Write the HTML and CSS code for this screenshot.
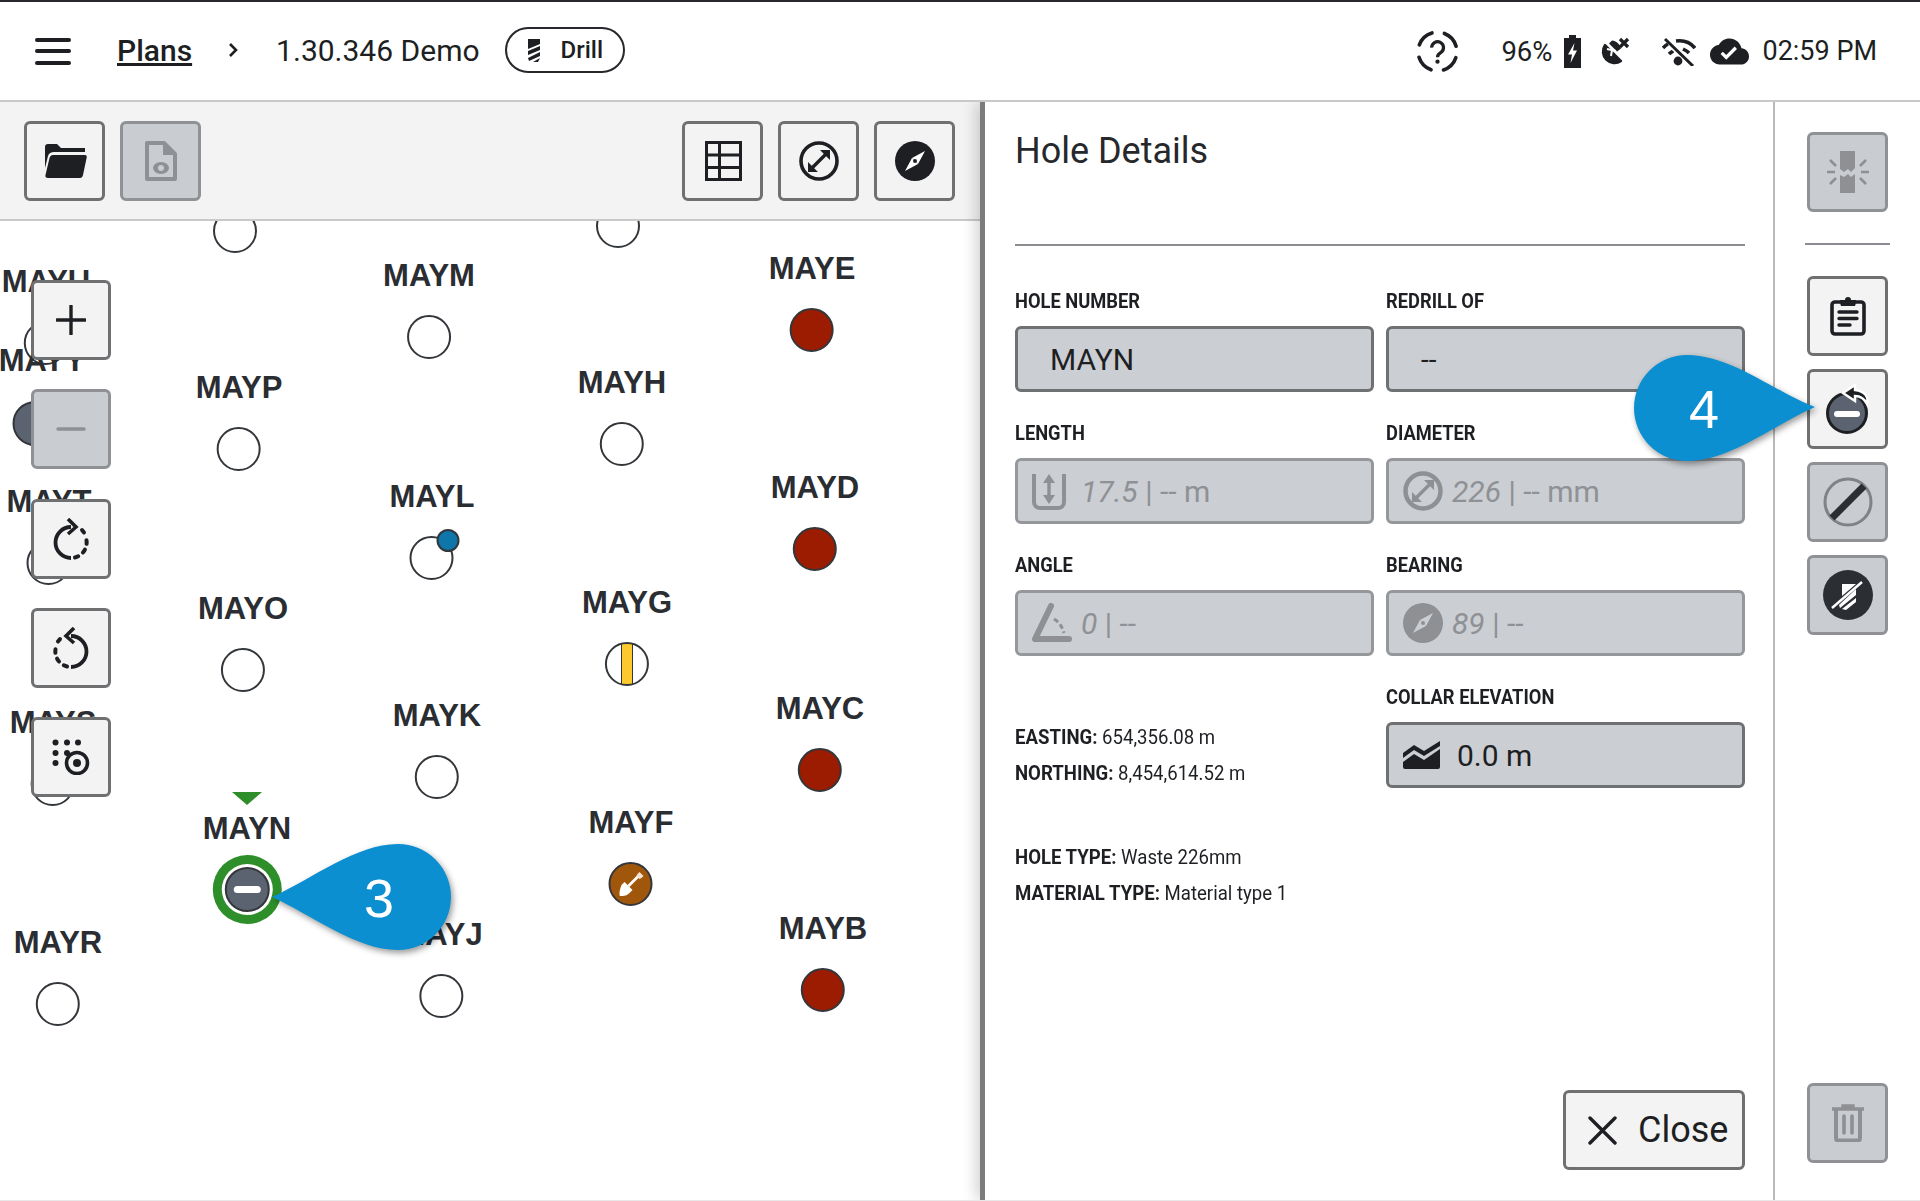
FILE: index.html
```html
<!doctype html>
<html lang="en">
<head>
    <meta charset="UTF-8">
    <title>Hole Details</title>
    <link rel="stylesheet" href="styles.css">
</head>
<body>
<div class="app">
    <header class="topbar">
        <div class="menu-icon"><span></span><span></span><span></span></div>
        <a class="crumb-link">Plans</a>
        <svg class="crumb-chevron" width="11" height="14" viewBox="0 0 11 14"><path d="M2 1l6 6-6 6" fill="none" stroke="#1d1f23" stroke-width="2.6"/></svg>
        <span class="crumb-current">1.30.346 Demo</span>
        <div class="mode-pill">
            <svg width="12" height="23" viewBox="0 0 12 23"><path d="M0 0h12v5L0 10zM12 7v4L0 16v-4zM12 13v4L1 22l-1-3zM12 19l-2 4H5z" fill="#1d1f23"/></svg>
            <span>Drill</span>
        </div>
        <div class="status">
            <svg class="status-help" width="43" height="43" viewBox="0 0 40 40">
                <circle cx="20" cy="20" r="18" fill="none" stroke="#1d1f23" stroke-width="3.4" stroke-linecap="round" stroke-dasharray="16.5 11.800" stroke-dashoffset="-5.900"/>
                <path d="M14.600 16.400a5.500 5.500 0 1 1 8.600 4.500c-2.200 1.400-3.200 2.200-3.200 4.400" fill="none" stroke="#1d1f23" stroke-width="3"/>
                <circle cx="20" cy="29.500" r="2" fill="#1d1f23"/>
            </svg>
            <span class="status-battery">96%</span>
            <svg width="17" height="33" viewBox="0 0 17 33"><path d="M5 0h7v3h5v30H0V3h5z" fill="#1d1f23"/><path d="M10.500 8L4 19.500h4L6.500 28 13 15.500H9z" fill="#fff"/></svg>
            <svg class="status-sat" width="30" height="29" viewBox="0 0 30 29">
                <path d="M5 8A11.500 11.500 0 0 0 21 24z" fill="#1d1f23" stroke="#1d1f23" stroke-width="2.400" stroke-linejoin="round"/>
                <path d="M8 7l14 14M10 4l15 15" stroke="#fff" stroke-width="1"/>
                <path d="M12 3.500c4 0 8 4 9 8l-4 3-8-8z" fill="#1d1f23"/>
                <path d="M7 12l9 2M12 13l-1 6" stroke="#fff" stroke-width="2" fill="none"/>
                <path d="M20 2l8 8M28 2l-8 8" stroke="#1d1f23" stroke-width="3.200"/>
            </svg>
            <svg class="status-wifi" width="34" height="29" viewBox="0 0 34 29">
                <path d="M14 4c7-1 14 1 19 7M1 11c2-2 3-3 5-4M7 17c1-1 3-2 4-3M21 12c2 1 4 2 6 4" fill="none" stroke="#1d1f23" stroke-width="3.600"/>
                <circle cx="16" cy="24" r="4.400" fill="#1d1f23"/>
                <path d="M3 2l28 27" stroke="#1d1f23" stroke-width="3"/>
            </svg>
            <svg class="status-cloud" width="39" height="33" viewBox="0 0 24 20"><path fill-rule="evenodd" transform="translate(0 -2)" d="M19.350 10.040C18.670 6.590 15.640 4 12 4 9.110 4 6.600 5.640 5.350 8.040 2.340 8.360 0 10.910 0 14c0 3.310 2.690 6 6 6h13c2.760 0 5-2.240 5-5 0-2.640-2.050-4.780-4.650-4.960zM10 17l-3.500-3.500 1.410-1.410L10 14.170l5.180-5.180 1.410 1.410L10 17z" fill="#1d1f23"/></svg>
            <span class="status-time">02:59 PM</span>
        </div>
    </header>

    <main class="main">
        <section class="plan">
            <div class="plan-toolbar">
                <button class="btn">
                    <svg class="folder-icon" width="42" height="34" viewBox="0 0 42 34"><path d="M0 3a3 3 0 0 1 3-3h9l4 4h24v4H9C6 8 4 9 3 12L0 24z" fill="#1d1f23"/><path d="M8 11h32c1.500 0 2 1 1.700 2.500L38 31c-.4 2-1.500 3-3 3H3c-2 0-3-1-2.500-3l4-17c.5-2 2-3 3.500-3z" fill="#1d1f23"/></svg>
                </button>
                <button class="btn btn-off">
                    <svg width="32" height="40" viewBox="0 0 32 40"><path d="M3 2h16l11 11v25H2V2z" fill="none" stroke="#8e9093" stroke-width="4" stroke-linejoin="round"/><path d="M18 1l13 13H18z" fill="#8e9093"/><ellipse cx="16" cy="27" rx="8" ry="6" fill="#8e9093"/><circle cx="16" cy="27" r="3" fill="#c9ccd0"/></svg>
                </button>
                <div class="plan-toolbar-right">
                    <button class="btn">
                        <svg class="table-icon" width="37" height="40" viewBox="0 0 37 40"><path d="M1.500 1.500h34v37h-34zM14.500 1.500v37M1.500 14h34M1.500 26.500h34" fill="none" stroke="#1d1f23" stroke-width="3"/></svg>
                    </button>
                    <button class="btn">
                        <svg width="40" height="40" viewBox="0 0 40 40"><circle cx="20" cy="20" r="18" fill="none" stroke="#1d1f23" stroke-width="3.600"/><path d="M13 27l14-14" stroke="#1d1f23" stroke-width="3.400"/><path d="M21 9h10v10zM9 21v10h10z" fill="#1d1f23"/></svg>
                    </button>
                    <button class="btn">
                        <svg width="40" height="40" viewBox="0 0 40 40"><circle cx="20" cy="20" r="20" fill="#1d1f23"/><path d="M30 10L17 17l6 6z" fill="#fff"/><path d="M10 30l7-13 6 6z" fill="#fff"/><circle cx="20" cy="20" r="2" fill="#1d1f23"/></svg>
                    </button>
                </div>
            </div>

            <div class="map">
                <div class="hole" style="left:235px;top:-13px"><span class="dot"></span></div>
                <div class="hole" style="left:618px;top:-18px"><span class="dot"></span></div>

                <div class="hole" style="left:46px;top:43px"><span class="hole-name">MAYU</span><span class="dot"></span></div>
                <div class="hole" style="left:42px;top:122px"><span class="hole-name">MAYY</span></div>
                <div class="hole" style="left:35px;top:179px"><span class="dot dot-grey"></span></div>
                <div class="hole" style="left:49px;top:263px"><span class="hole-name">MAYT</span><span class="dot"></span></div>
                <div class="hole" style="left:53px;top:484px"><span class="hole-name">MAYS</span><span class="dot"></span></div>
                <div class="hole" style="left:58px;top:704px"><span class="hole-name">MAYR</span><span class="dot"></span></div>

                <div class="hole" style="left:239px;top:149px"><span class="hole-name">MAYP</span><span class="dot"></span></div>
                <div class="hole" style="left:243px;top:370px"><span class="hole-name">MAYO</span><span class="dot"></span></div>
                <div class="hole" style="left:247px;top:590px"><span class="hole-name">MAYN</span><span class="dot dot-current"></span></div>
                <div class="current-marker"></div>

                <div class="hole" style="left:429px;top:37px"><span class="hole-name">MAYM</span><span class="dot"></span></div>
                <div class="hole" style="left:432px;top:258px"><span class="hole-name">MAYL</span><span class="dot"><span class="dot-badge"></span></span></div>
                <div class="hole" style="left:437px;top:477px"><span class="hole-name">MAYK</span><span class="dot"></span></div>
                <div class="hole" style="left:441px;top:696px"><span class="hole-name">MAYJ</span><span class="dot"></span></div>

                <div class="hole" style="left:622px;top:144px"><span class="hole-name">MAYH</span><span class="dot"></span></div>
                <div class="hole" style="left:627px;top:364px"><span class="hole-name">MAYG</span><span class="dot dot-yellow"></span></div>
                <div class="hole" style="left:631px;top:584px"><span class="hole-name">MAYF</span>
                    <span class="dot dot-brown">
                        <svg width="30" height="30" viewBox="0 0 30 30"><path d="M13 17l11-11" stroke="#fff" stroke-width="2.600"/><path d="M22 5l2-2 4 4-2 2-2 1-3-3z" fill="#f2e4d2"/><path d="M9 13l8 8-3 3c-2 2-4 3-7 3H5c-1 0-1-1-1-1v-2c0-3 1-5 2-8z" fill="#fff"/></svg>
                    </span>
                </div>

                <div class="hole" style="left:812px;top:30px"><span class="hole-name">MAYE</span><span class="dot dot-red"></span></div>
                <div class="hole" style="left:815px;top:249px"><span class="hole-name">MAYD</span><span class="dot dot-red"></span></div>
                <div class="hole" style="left:820px;top:470px"><span class="hole-name">MAYC</span><span class="dot dot-red"></span></div>
                <div class="hole" style="left:823px;top:690px"><span class="hole-name">MAYB</span><span class="dot dot-red"></span></div>

                <div class="map-tools">
                    <button class="btn btn-map">
                        <svg width="30" height="30" viewBox="0 0 30 30"><path d="M15 1v28M1 15h28" stroke="#1d1f23" stroke-width="3.400" stroke-linecap="round"/></svg>
                    </button>
                    <button class="btn btn-map btn-off">
                        <svg width="30" height="30" viewBox="0 0 30 30"><path d="M2 15h26" stroke="#8e9093" stroke-width="3.400" stroke-linecap="round"/></svg>
                    </button>
                    <button class="btn btn-map">
                        <svg width="40" height="42" viewBox="0 0 40 42"><path d="M20 9A15.500 15.500 0 0 0 20 40" fill="none" stroke="#1d1f23" stroke-width="3.800"/><path d="M24 39.500A15.500 15.500 0 0 0 35 20" fill="none" stroke="#1d1f23" stroke-width="4" stroke-linecap="round" stroke-dasharray="3.500 6"/><path d="M17 1l8 8-8 7" fill="none" stroke="#1d1f23" stroke-width="3.600"/><path d="M31 12l2 2.500" stroke="#1d1f23" stroke-width="4" stroke-linecap="round"/></svg>
                    </button>
                    <button class="btn btn-map">
                        <svg width="40" height="42" viewBox="0 0 40 42"><path d="M20 9A15.500 15.500 0 0 1 20 40" fill="none" stroke="#1d1f23" stroke-width="3.800"/><path d="M16 39.500A15.500 15.500 0 0 1 5 20" fill="none" stroke="#1d1f23" stroke-width="4" stroke-linecap="round" stroke-dasharray="3.500 6"/><path d="M23 1l-8 8 8 7" fill="none" stroke="#1d1f23" stroke-width="3.600"/><path d="M9 12l-2 2.500" stroke="#1d1f23" stroke-width="4" stroke-linecap="round"/></svg>
                    </button>
                    <button class="btn btn-map">
                        <svg width="38" height="36" viewBox="0 0 38 36"><g fill="#1d1f23"><circle cx="3.500" cy="3.500" r="3"/><circle cx="15" cy="3.500" r="3"/><circle cx="26" cy="3.500" r="3"/><circle cx="3.500" cy="14" r="3"/><circle cx="15" cy="14" r="3"/><circle cx="3.500" cy="24" r="3"/></g><circle cx="25" cy="24" r="10.500" fill="#f3f3f3" stroke="#1d1f23" stroke-width="3.600"/><circle cx="25" cy="24" r="4" fill="#1d1f23"/></svg>
                    </button>
                </div>
            </div>
        </section>

        <section class="details">
            <h1 class="details-title">Hole Details</h1>
            <div class="fields">
                <div class="field">
                    <label>HOLE NUMBER</label>
                    <div class="input input-plain">MAYN</div>
                </div>
                <div class="field">
                    <label>REDRILL OF</label>
                    <div class="input input-plain input-small">--</div>
                </div>
                <div class="field">
                    <label>LENGTH</label>
                    <div class="input input-off">
                        <svg class="input-icon input-icon-length" width="34" height="38" viewBox="0 0 34 38"><path d="M2 2v28c0 4 3 6 6 6h18c3 0 6-2 6-6V2" fill="none" stroke="#8e9093" stroke-width="4"/><path d="M17 6v22" stroke="#8e9093" stroke-width="3.400"/><path d="M11 11l6-9 6 9zM11 23l6 9 6-9z" fill="#8e9093"/></svg>
                        <span><em>17.5</em> | -- m</span>
                    </div>
                </div>
                <div class="field">
                    <label>DIAMETER</label>
                    <div class="input input-off">
                        <svg class="input-icon" width="40" height="40" viewBox="0 0 40 40"><circle cx="20" cy="20" r="17.500" fill="none" stroke="#8e9093" stroke-width="4.500"/><path d="M13 27l14-14" stroke="#8e9093" stroke-width="3.400"/><path d="M21 9h10v10zM9 21v10h10z" fill="#8e9093"/></svg>
                        <span><em>226</em> | -- mm</span>
                    </div>
                </div>
                <div class="field">
                    <label>ANGLE</label>
                    <div class="input input-off">
                        <svg class="input-icon" width="40" height="40" viewBox="0 0 40 40"><path d="M19 3L3 36h34" fill="none" stroke="#8e9093" stroke-width="6" stroke-linejoin="round" stroke-linecap="round"/><path d="M22 16c5 3 8 7 10 14" fill="none" stroke="#8e9093" stroke-width="3" stroke-dasharray="5 3"/></svg>
                        <span><em>0</em> | --</span>
                    </div>
                </div>
                <div class="field">
                    <label>BEARING</label>
                    <div class="input input-off">
                        <svg class="input-icon" width="40" height="40" viewBox="0 0 40 40"><circle cx="20" cy="20" r="20" fill="#8e9093"/><path d="M30 10L17 17l6 6z" fill="#cbced2"/><path d="M10 30l7-13 6 6z" fill="#cbced2"/><circle cx="20" cy="20" r="2" fill="#8e9093"/></svg>
                        <span><em>89</em> | --</span>
                    </div>
                </div>
                <div class="info">
                    <p class="info-coords"><b>EASTING:</b> 654,356.08 m</p>
                    <p><b>NORTHING:</b> 8,454,614.52 m</p>
                    <p class="info-type"><b>HOLE TYPE:</b> Waste 226mm</p>
                    <p><b>MATERIAL TYPE:</b> Material type 1</p>
                </div>
                <div class="field">
                    <label>COLLAR ELEVATION</label>
                    <div class="input">
                        <svg class="input-icon input-icon-collar" width="37" height="28" viewBox="0 0 37 28"><path d="M0 12L11 4l10 6L37 0v5L21 15l-10-6-11 8z" fill="#1d1f23"/><path d="M0 21l11-8 10 6 16-11v18a2 2 0 0 1-2 2H2a2 2 0 0 1-2-2z" fill="#1d1f23"/></svg>
                        <span>0.0 m</span>
                    </div>
                </div>
            </div>
            <button class="btn btn-close">
                <svg width="29" height="29" viewBox="0 0 29 29"><path d="M2 2l25 25M27 2L2 27" stroke="#1d1f23" stroke-width="3.400" stroke-linecap="round"/></svg>
                <span>Close</span>
            </button>
        </section>

        <aside class="side">
            <button class="btn btn-off">
                <svg width="42" height="42" viewBox="0 0 42 42"><path d="M13 0h15v17l-4 4-3-3-4 3-4-3zM13 24l4 2 4-3 3 3 4-3v19H13z" fill="#8e9093"/><path d="M0 21h8M34 21h8M3 9l6 6M39 9l-6 6M3 33l6-6M39 33l-6-6" stroke="#8e9093" stroke-width="2.600"/></svg>
            </button>
            <div class="side-rule"></div>
            <button class="btn">
                <svg width="36" height="40" viewBox="0 0 36 40"><path d="M5 6h26a3 3 0 0 1 3 3v26a3 3 0 0 1-3 3H5a3 3 0 0 1-3-3V9a3 3 0 0 1 3-3z" fill="none" stroke="#1d1f23" stroke-width="3.600"/><path d="M10 7V4h5a3 3 0 0 1 6 0h5v3l-1 3H11z" fill="#1d1f23"/><path d="M9 16h18M9 22.500h18M9 29h11" stroke="#1d1f23" stroke-width="3.400" stroke-linecap="round"/></svg>
            </button>
            <button class="btn">
                <svg width="44" height="50" viewBox="0 0 44 50"><circle cx="21" cy="29" r="19.500" fill="#5c6370" stroke="#1d1f23" stroke-width="3"/><path d="M11 30h20" stroke="#fff" stroke-width="6" stroke-linecap="round"/><path d="M29 1L17 9l12 8v-5c5 0 9 2 12 8 2-7-2-13-12-14z" fill="#1d1f23" stroke="#fff" stroke-width="2.400"/></svg>
            </button>
            <button class="btn btn-off">
                <svg width="50" height="50" viewBox="0 0 50 50"><circle cx="25" cy="25" r="23" fill="none" stroke="#808285" stroke-width="3"/><path d="M9 41L41 9" stroke="#2b2e33" stroke-width="7"/></svg>
            </button>
            <button class="btn btn-off">
                <svg width="50" height="50" viewBox="0 0 50 50"><circle cx="25" cy="25" r="25" fill="#2b2e33"/><path d="M9 38L39 12" stroke="#fff" stroke-width="2.400"/><path d="M19 14h14l-14 12zM33 19v6L17 38l-1-3zM33 28v4L23 40l-4-1z" fill="#fff"/></svg>
            </button>
            <button class="btn btn-off side-trash">
                <svg width="32" height="38" viewBox="0 0 32 38"><path d="M0 5h32M11 5V2h10v3" stroke="#8e9093" stroke-width="3.400" fill="none"/><path d="M4 6v28c0 1.500 1 2.500 2.500 2.500h19c1.500 0 2.500-1 2.500-2.500V6" fill="none" stroke="#8e9093" stroke-width="4"/><path d="M12 12v17M20 12v17" stroke="#8e9093" stroke-width="3.600" stroke-linecap="round"/></svg>
            </button>
        </aside>
    </main>

    <div class="callout callout-3">
        <svg width="182" height="110" viewBox="0 0 182 110"><path d="M0 54C40 36 84 1 126 1a53 53 0 0 1 0 106C84 107 40 72 0 54z" fill="#0b8fd1"/></svg>
        <span>3</span>
    </div>
    <div class="callout callout-4">
        <svg width="184" height="110" viewBox="0 0 184 110"><path d="M182 53C142 38 98 1 54 1a53 53 0 0 0 0 106C98 107 142 70 182 53z" fill="#0b8fd1"/></svg>
        <span>4</span>
    </div>
</div>
</body>
</html>
```

FILE: styles.css
```css
html, body {
    margin: 0;
    padding: 0;
}

body {
    width: 1920px;
    height: 1201px;
    overflow: hidden;
    background-color: #fff;
    color: #1d1f23;
    font-family: Roboto, sans-serif;
}

.app {
    position: relative;
    width: 1920px;
    height: 1201px;
    display: flex;
    flex-direction: column;
}

/* top bar */
.topbar {
    flex: none;
    box-sizing: border-box;
    height: 102px;
    padding: 0 43px 2px 35px;
    display: flex;
    align-items: center;
    border-top: 2px solid #26282c;
    border-bottom: 2px solid #c9c9c9;
}

.menu-icon {
    width: 36px;
    display: flex;
    flex-direction: column;
    gap: 7.5px;
    margin-top: 2px;
    margin-right: 46px;
}

.menu-icon > span {
    height: 4px;
    border-radius: 2px;
    background-color: #1d1f23;
}

.crumb-link {
    font-size: 30px;
    font-weight: 500;
    text-decoration: underline;
}

.crumb-chevron {
    margin: 0 37px 0 36px;
}

.crumb-current {
    font-size: 30px;
    margin-right: 25px;
}

.mode-pill {
    box-sizing: border-box;
    width: 120px;
    height: 46px;
    padding-left: 21px;
    display: flex;
    align-items: center;
    gap: 21px;
    border: 2.5px solid #26282c;
    border-radius: 23px;
    font-size: 24px;
    font-weight: 500;
}

.status {
    margin-left: auto;
    margin-top: 2px;
    display: flex;
    align-items: center;
}

.status-battery {
    margin: 0 12px 0 42px;
    font-size: 27.5px;
}

.status-sat {
    margin-left: 19px;
}

.status-wifi {
    margin-left: 32px;
}

.status-cloud {
    margin-left: 14px;
}

.status-time {
    margin-left: 13px;
    font-size: 27px;
}

/* main layout */
.main {
    flex: 1;
    min-height: 0;
    display: flex;
    border-bottom: 1px solid #e8e8e8;
}

.btn {
    flex: none;
    box-sizing: border-box;
    width: 80px;
    height: 80px;
    padding: 0;
    display: flex;
    align-items: center;
    justify-content: center;
    border: 3px solid #6f7072;
    border-radius: 6px;
    background-color: #f3f3f3;
    color: inherit;
    font-family: inherit;
}

.btn-off {
    border-color: #8f9194;
    background-color: #c9ccd0;
}

/* left plan */
.plan {
    flex: none;
    width: 980px;
    display: flex;
    flex-direction: column;
}

.plan-toolbar {
    flex: none;
    box-sizing: border-box;
    height: 119px;
    padding: 19px 25px 0 24px;
    display: flex;
    gap: 15px;
    align-items: flex-start;
    background-color: #f3f3f3;
    border-bottom: 2px solid #c9c9c9;
}

.plan-toolbar .btn {
    width: 81px;
}

.plan-toolbar-right {
    margin-left: auto;
    display: flex;
    gap: 15px;
}

.folder-icon {
    margin-left: 3px;
}

.table-icon {
    margin-left: 1px;
}

.map {
    position: relative;
    flex: 1;
    overflow: hidden;
    background-color: #fff;
}

.hole {
    position: absolute;
    margin-top: 1px;
    display: flex;
    flex-direction: column;
    align-items: center;
    gap: 22px;
    transform: translateX(-50%);
}

.hole-name {
    font-family: "Liberation Sans", sans-serif;
    font-size: 31px;
    font-weight: 700;
    line-height: 34px;
    color: #2a2d31;
    white-space: nowrap;
}

.dot {
    position: relative;
    box-sizing: border-box;
    width: 44px;
    height: 44px;
    display: flex;
    align-items: center;
    justify-content: center;
    border: 2.5px solid #33363a;
    border-radius: 50%;
    background-color: #fff;
}

.dot-red {
    background-color: #9b1c00;
}

.dot-brown {
    background-color: #a0570c;
}

.dot-yellow {
    background: linear-gradient(90deg, #fff 0 14px, #33363a 14px 15px, #fdc92e 15px 25px, #33363a 25px 26px, #fff 26px);
}

.dot-grey {
    width: 45px;
    height: 45px;
    background-color: #5c6370;
}

.dot-current {
    width: 45px;
    height: 45px;
    margin-top: -1px;
    background-color: #5c6370;
    box-shadow: 0 0 0 3px #fff, 0 0 0 12px #2e8f2a;
}

.dot-current::after {
    content: "";
    width: 27px;
    height: 7px;
    border-radius: 4px;
    background-color: #fff;
}

.dot-badge {
    position: absolute;
    left: 25px;
    top: -9px;
    box-sizing: border-box;
    width: 23px;
    height: 23px;
    border: 2px solid #33363a;
    border-radius: 50%;
    background-color: #0e76a8;
}

.current-marker {
    position: absolute;
    left: 232px;
    top: 571px;
    width: 0;
    height: 0;
    border-left: 15px solid transparent;
    border-right: 15px solid transparent;
    border-top: 13px solid #2e8f2a;
}

.map-tools {
    position: absolute;
    left: 31px;
    top: 59px;
    display: flex;
    flex-direction: column;
    gap: 29.25px;
}

/* hole details */
.details {
    position: relative;
    flex: 1;
    min-width: 0;
    padding: 0 28px 30px 30px;
    display: flex;
    flex-direction: column;
    border-left: 5px solid #7b7b7b;
    background-color: #fff;
    box-shadow: -4px 0 14px rgba(0, 0, 0, .18);
    clip-path: inset(0 0 0 -30px);
}

.details-title {
    box-sizing: border-box;
    height: 144px;
    margin: 0 0 43px;
    padding-top: 27px;
    border-bottom: 2px solid #8b8d90;
    color: #26282c;
    font-size: 36px;
    font-weight: 400;
    line-height: 44px;
}

.fields {
    display: grid;
    grid-template-columns: 1fr 1fr;
    column-gap: 12px;
    row-gap: 29px;
}

.field > label {
    display: block;
    margin-bottom: 13px;
    font-size: 20px;
    font-weight: 700;
    line-height: 24px;
    white-space: nowrap;
    transform: scaleX(.915);
    transform-origin: left;
}

.input {
    box-sizing: border-box;
    height: 66px;
    padding-left: 14px;
    display: flex;
    align-items: center;
    border: 3px solid #6f7072;
    border-radius: 6px;
    background-color: #cbced2;
    font-size: 30px;
}

.input-plain {
    padding-left: 32px;
}

.input-small {
    font-size: 28px;
}

.input-off {
    border-color: #95979a;
    color: #8e9195;
}

.input-icon {
    flex: none;
    margin-right: 9px;
}

.input-icon-length {
    margin-right: 15px;
}

.input-icon-collar {
    margin-right: 17px;
}

.info {
    padding-top: 34px;
    font-size: 20px;
}

.info > p {
    margin: 0;
    line-height: 36px;
    white-space: nowrap;
    transform: scaleX(.93);
    transform-origin: left;
}

.info b {
    font-weight: 700;
}

.info-type {
    padding-top: 48px;
}

.btn-close {
    width: 182px;
    margin-top: auto;
    padding-left: 22px;
    align-self: flex-end;
    justify-content: flex-start;
    gap: 21px;
    font-size: 36px;
}

/* right column */
.side {
    flex: none;
    box-sizing: border-box;
    width: 147px;
    padding: 30px 0 37px;
    display: flex;
    flex-direction: column;
    align-items: center;
    gap: 13px;
    border-left: 2px solid #b9b9b9;
}

.side .btn {
    width: 81px;
}

.side-rule {
    width: 85px;
    height: 2px;
    margin: 18px 0;
    background-color: #8b8d90;
}

.side-trash {
    margin-top: auto;
}

/* callouts */
.callout {
    position: absolute;
    z-index: 5;
}

.callout > svg {
    display: block;
    filter: drop-shadow(2px 3px 3px rgba(0, 0, 0, .4));
}

.callout > span {
    position: absolute;
    top: 50%;
    transform: translate(-50%, -50%);
    font-family: "Liberation Sans", sans-serif;
    font-size: 54px;
    line-height: 60px;
    color: #fff;
}

.callout-3 {
    left: 272px;
    top: 843px;
}

.callout-3 > span {
    left: 107px;
}

.callout-4 {
    left: 1633px;
    top: 354px;
}

.callout-4 > span {
    left: 71px;
}
```
